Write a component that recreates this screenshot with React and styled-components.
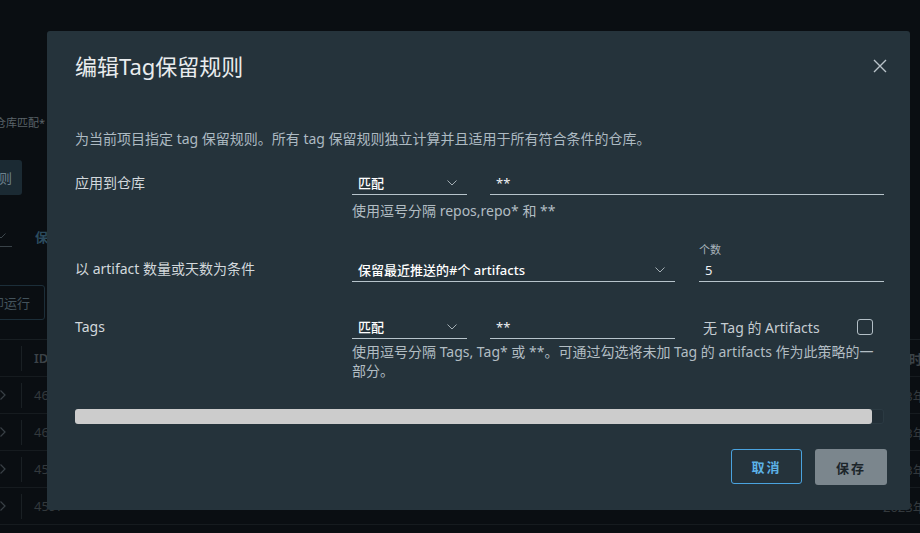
import styled, { createGlobalStyle } from 'styled-components'

const GlobalStyle = createGlobalStyle`
  html, body {
    margin: 0;
    padding: 0;
  }
  body {
    background: #0a0e12;
    font-family: "Noto Sans", "Noto Sans CJK SC", sans-serif;
    overflow: hidden;
  }
`

const Chevron = ({ dir = 'down', color = '#a3aeb4' }) =>
  dir === 'down' ? (
    <svg width="10" height="6" viewBox="0 0 10 6" fill="none">
      <polyline points="0.5,0.5 5,5 9.5,0.5" stroke={color} strokeWidth="1" />
    </svg>
  ) : (
    <svg width="6" height="10" viewBox="0 0 6 10" fill="none">
      <polyline points="0.5,0.5 5,5 0.5,9.5" stroke={color} strokeWidth="1.2" />
    </svg>
  )

const rows = [
  { id: '4612', time: '2023年11月' },
  { id: '4611', time: '2023年11月' },
  { id: '4598', time: '2023年11月' },
  { id: '4597', time: '2023年11月' },
]

const App = () => {
  return (
    <>
      <GlobalStyle />
      <Backdrop>
        <BgInner>
          <BgHint>的仓库匹配*</BgHint>
          <BgPrimary>添加规则</BgPrimary>
          <BgToolbar>
            <BgSelect>
              <Chevron color="#3d474d" />
            </BgSelect>
            <BgLink>保留历史</BgLink>
          </BgToolbar>
          <BgOutline>立即运行</BgOutline>
          <BgTable>
            <BgRow $head>
              <BgExpand />
              <BgCell>ID</BgCell>
              <span />
              <BgText>创建时间</BgText>
            </BgRow>
            {rows.map((r) => (
              <BgRow key={r.id}>
                <BgExpand>
                  <Chevron dir="right" color="#394046" />
                </BgExpand>
                <BgCell>{r.id}</BgCell>
                <span />
                <BgText>{r.time}</BgText>
              </BgRow>
            ))}
          </BgTable>
        </BgInner>
      </Backdrop>

      <Overlay>
        <Modal>
          <Header>
            <Title>编辑Tag保留规则</Title>
            <Close aria-label="close">
              <svg width="18" height="18" viewBox="0 0 18 18" fill="none">
                <path d="M3 3L15 15M15 3L3 15" stroke="#b9c3c9" strokeWidth="1.4" />
              </svg>
            </Close>
          </Header>

          <Description>
            为当前项目指定 tag 保留规则。所有 tag 保留规则独立计算并且适用于所有符合条件的仓库。
          </Description>

          <FormRow $top={22}>
            <Label>应用到仓库</Label>
            <Controls>
              <ControlLine>
                <Field $w={115}>
                  <SelectBox>
                    匹配
                    <Chevron />
                  </SelectBox>
                </Field>
                <Field $w={394}>
                  <InputBox>**</InputBox>
                </Field>
              </ControlLine>
              <Helper $mt={6}>使用逗号分隔 repos,repo* 和 **</Helper>
            </Controls>
          </FormRow>

          <FormRow $top={23}>
            <Label $pad={14}>以 artifact 数量或天数为条件</Label>
            <Controls>
              <ControlLine $gap={24}>
                <Field $w={323}>
                  <SelectBox>
                    保留最近推送的#个 artifacts
                    <Chevron />
                  </SelectBox>
                </Field>
                <Field $w={185}>
                  <Caption>个数</Caption>
                  <InputBox>5</InputBox>
                </Field>
              </ControlLine>
            </Controls>
          </FormRow>

          <FormRow $top={33}>
            <Label>Tags</Label>
            <Controls>
              <ControlLine>
                <Field $w={115}>
                  <SelectBox>
                    匹配
                    <Chevron />
                  </SelectBox>
                </Field>
                <Field $w={185}>
                  <InputBox>**</InputBox>
                </Field>
                <CheckField>
                  <CheckText>无 Tag 的 Artifacts</CheckText>
                  <CheckBox />
                </CheckField>
              </ControlLine>
              <Helper $mt={3}>
                使用逗号分隔 Tags, Tag* 或 **。可通过勾选将未加 Tag 的 artifacts 作为此策略的一部分。
              </Helper>
            </Controls>
          </FormRow>

          <Track>
            <Fill style={{ width: '98.5%' }} />
          </Track>

          <Footer>
            <CancelButton>取消</CancelButton>
            <SaveButton>保存</SaveButton>
          </Footer>
        </Modal>
      </Overlay>
    </>
  )
}

/* ---------- page behind the dialog ---------- */

const Backdrop = styled.div`
  position: fixed;
  inset: 0;
  overflow: hidden;
  background: #0a0e12;
`
const BgInner = styled.div`
  margin-left: -60px;
  padding-top: 115px;
  display: flex;
  flex-direction: column;
  align-items: flex-start;
`
const BgHint = styled.div`
  width: 105px;
  text-align: right;
  font-size: 11px;
  line-height: 16px;
  color: #5a6369;
  white-space: nowrap;
`
const BgPrimary = styled.div`
  margin-top: 29px;
  width: 82px;
  height: 35px;
  box-sizing: border-box;
  padding-right: 10px;
  display: flex;
  align-items: center;
  justify-content: flex-end;
  background: #1b2a33;
  border-radius: 3px;
  font-size: 13px;
  color: #6d808c;
`
const BgToolbar = styled.div`
  margin-top: 30px;
  height: 22px;
  display: flex;
  align-items: center;
`
const BgSelect = styled.div`
  width: 72px;
  height: 22px;
  box-sizing: border-box;
  padding-right: 6px;
  display: flex;
  align-items: center;
  justify-content: flex-end;
  border-bottom: 1px solid #394248;
`
const BgLink = styled.div`
  margin-left: 23px;
  font-size: 13px;
  font-weight: 600;
  color: #2c4b5e;
`
const BgOutline = styled.div`
  margin-top: 38px;
  width: 105px;
  height: 35px;
  box-sizing: border-box;
  padding-right: 14px;
  display: flex;
  align-items: center;
  justify-content: flex-end;
  border: 1px solid #1c2e39;
  border-radius: 3px;
  font-size: 13px;
  color: #43535c;
`
const BgTable = styled.div`
  margin-top: 19px;
  width: 1100px;
  border-top: 1px solid #181e22;
`
const BgRow = styled.div`
  display: grid;
  grid-template-columns: 81px 120px 1fr 157px;
  align-items: center;
  height: 37px;
  box-sizing: border-box;
  border-bottom: 1px solid #161b1f;
  font-size: 13px;
  font-weight: ${(p) => (p.$head ? 600 : 400)};
  color: ${(p) => (p.$head ? '#3c4348' : '#33393d')};
`
const BgExpand = styled.div`
  display: flex;
  justify-content: flex-end;
  padding-right: 15px;
`
const BgCell = styled.div`
  height: 25px;
  line-height: 25px;
  padding-left: 12px;
  border-left: 1px solid #1a2024;
`
const BgText = styled.div`
  white-space: nowrap;
`

/* ---------- dialog ---------- */

const Overlay = styled.div`
  position: fixed;
  inset: 0;
  display: flex;
  align-items: flex-start;
  padding: 31px 0 0 47px;
`
const Modal = styled.div`
  width: 863px;
  height: 479px;
  box-sizing: border-box;
  padding: 20px 26px 24px 28px;
  background: #25333b;
  border-radius: 3px;
  display: flex;
  flex-direction: column;
`
const Header = styled.div`
  display: flex;
  justify-content: space-between;
  align-items: center;
  height: 30px;
`
const Title = styled.h2`
  margin: 0;
  font-size: 22px;
  font-weight: 400;
  line-height: 30px;
  color: #e9ecee;
`
const Close = styled.button`
  display: flex;
  padding: 0;
  margin-right: -5px;
  background: none;
  border: none;
  cursor: pointer;
`
const Description = styled.p`
  margin: 48px 0 0;
  font-size: 14px;
  line-height: 20px;
  color: #adbac2;
`
const FormRow = styled.div`
  display: grid;
  grid-template-columns: 277px 1fr;
  align-items: start;
  margin-top: ${(p) => p.$top}px;
`
const Label = styled.div`
  padding-top: ${(p) => p.$pad || 0}px;
  font-size: 14px;
  line-height: 24px;
  color: #d2d8dc;
`
const Controls = styled.div`
  display: flex;
  flex-direction: column;
`
const ControlLine = styled.div`
  display: flex;
  align-items: flex-end;
  gap: ${(p) => p.$gap || 23}px;
`
const Field = styled.div`
  width: ${(p) => p.$w}px;
  display: flex;
  flex-direction: column;
`
const Caption = styled.div`
  font-size: 11px;
  line-height: 14px;
  color: #a8b4bb;
  margin-bottom: 1px;
`
const SelectBox = styled.div`
  height: 24px;
  box-sizing: border-box;
  padding: 0 10px 0 6px;
  display: flex;
  align-items: center;
  justify-content: space-between;
  border-bottom: 1px solid #b7c4cb;
  font-size: 13px;
  font-weight: 500;
  color: #ffffff;
  white-space: nowrap;
`
const InputBox = styled.div`
  height: 24px;
  box-sizing: border-box;
  padding: 0 6px;
  display: flex;
  align-items: center;
  border-bottom: 1px solid #b7c4cb;
  font-size: 13px;
  color: #eef1f3;
`
const CheckField = styled.div`
  flex: 1;
  height: 24px;
  display: flex;
  align-items: center;
  justify-content: space-between;
  padding: 0 11px 0 5px;
`
const CheckText = styled.span`
  font-size: 14px;
  color: #c5cdd2;
`
const CheckBox = styled.span`
  width: 16px;
  height: 16px;
  box-sizing: border-box;
  border: 1px solid #b3bfc6;
  border-radius: 3px;
`
const Helper = styled.div`
  margin-top: ${(p) => p.$mt || 6}px;
  font-size: 14px;
  line-height: 19px;
  color: #b2bdc3;
`
const Track = styled.div`
  margin-top: 29px;
  height: 15px;
  border-radius: 3px;
  background: #222f37;
  box-shadow: inset 0 0 0 1px #2b3a42;
  display: flex;
`
const Fill = styled.div`
  height: 100%;
  border-radius: 3px;
  background: #cccccc;
`
const Footer = styled.div`
  margin-top: 25px;
  margin-right: -3px;
  display: flex;
  justify-content: flex-end;
  align-items: flex-start;
  gap: 13px;
`
const CancelButton = styled.button`
  width: 71px;
  height: 35px;
  padding: 0;
  background: transparent;
  border: 1px solid #4aa3df;
  border-radius: 3px;
  font-family: inherit;
  font-size: 13px;
  font-weight: 600;
  letter-spacing: 2px;
  color: #5cb2e7;
  cursor: pointer;
`
const SaveButton = styled.button`
  width: 72px;
  height: 36px;
  padding: 0;
  background: #7b868d;
  border: none;
  border-radius: 3px;
  font-family: inherit;
  font-size: 13px;
  font-weight: 600;
  letter-spacing: 2px;
  color: #1c252a;
`

export default App
